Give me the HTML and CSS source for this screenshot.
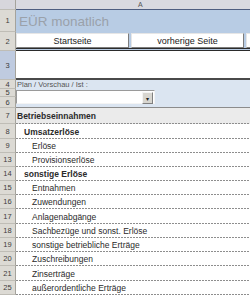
FILE: index.html
```html
<!DOCTYPE html>
<html lang="de">
<head>
    <meta charset="UTF-8">
    <title>EÜR monatlich</title>
    <link rel="stylesheet" href="styles.css">
</head>
<body>
    <div class="sheet">
        <div class="row colhead">
            <div class="rh corner"></div>
            <div class="cell">A</div>
        </div>
        <div class="row r1">
            <div class="rh">1</div>
            <div class="cell title">EÜR monatlich</div>
        </div>
        <div class="row r2">
            <div class="rh">2</div>
            <div class="cell nav">
                <button>Startseite</button>
                <button>vorherige Seite</button>
                <button></button>
            </div>
        </div>
        <div class="row r3">
            <div class="rh sel">3</div>
            <div class="cell box"></div>
        </div>
        <div class="row r4">
            <div class="rh">4</div>
            <div class="cell plan">Plan / Vorschau / Ist :</div>
        </div>
        <div class="row r5">
            <div class="rh">5</div>
            <div class="cell plan">
                <div class="combo"><span class="arrow">&#9662;</span></div>
            </div>
        </div>
        <div class="row r6">
            <div class="rh">6</div>
            <div class="cell plan last"></div>
        </div>
        <div class="row r7">
            <div class="rh">7</div>
            <div class="cell item section">Betriebseinnahmen</div>
        </div>
        <div class="row h15">
            <div class="rh">8</div>
            <div class="cell item group">Umsatzerlöse</div>
        </div>
        <div class="row">
            <div class="rh">9</div>
            <div class="cell item sub">Erlöse</div>
        </div>
        <div class="row">
            <div class="rh">13</div>
            <div class="cell item sub">Provisionserlöse</div>
        </div>
        <div class="row">
            <div class="rh">14</div>
            <div class="cell item group">sonstige Erlöse</div>
        </div>
        <div class="row">
            <div class="rh">15</div>
            <div class="cell item sub">Entnahmen</div>
        </div>
        <div class="row">
            <div class="rh">16</div>
            <div class="cell item sub">Zuwendungen</div>
        </div>
        <div class="row h15">
            <div class="rh">17</div>
            <div class="cell item sub">Anlagenabgänge</div>
        </div>
        <div class="row">
            <div class="rh">18</div>
            <div class="cell item sub">Sachbezüge und sonst. Erlöse</div>
        </div>
        <div class="row">
            <div class="rh">19</div>
            <div class="cell item sub">sonstige betriebliche Erträge</div>
        </div>
        <div class="row">
            <div class="rh">20</div>
            <div class="cell item sub">Zuschreibungen</div>
        </div>
        <div class="row h15">
            <div class="rh">21</div>
            <div class="cell item sub">Zinserträge</div>
        </div>
        <div class="row">
            <div class="rh">25</div>
            <div class="cell item sub">außerordentliche Erträge</div>
        </div>
    </div>
</body>
</html>
```

FILE: styles.css
```css
body {
    margin: 0;
    background-color: #fff;
    font-family: "Liberation Sans", Arial, sans-serif;
    overflow: hidden;
}
.sheet {
    width: 250px;
    overflow: hidden;
}
.row {
    display: flex;
    height: 14px;
}
.h15 {
    height: 15px;
}
.rh {
    width: 16px;
    flex: none;
    box-sizing: border-box;
    background-color: #dcdad4;
    border-right: 1px solid #a5a39c;
    border-bottom: 1px solid #bfbdb6;
    color: #3c3c3c;
    font-size: 7.5px;
    display: flex;
    align-items: center;
    justify-content: center;
}
.rh.sel {
    background-color: #bfcbe0;
}
.cell {
    flex: 1;
    min-width: 0;
    box-sizing: border-box;
    display: flex;
    align-items: center;
    overflow: hidden;
}
.colhead {
    height: 10px;
}
.colhead .rh {
    background-color: #d7d6dc;
}
.colhead .cell {
    background-color: #d9d9e0;
    border-bottom: 1px solid #4e5d80;
    color: #555;
    font-size: 7px;
    padding-left: 122px;
}
.r1 {
    height: 22px;
}
.title {
    background-color: #b8cce4;
    color: #9aa1aa;
    font-size: 13.5px;
    padding-left: 3px;
}
.r2 {
    height: 19px;
}
.nav {
    background-color: #b8cce4;
    border-bottom: 3px double #2b2b2b;
    gap: 2px;
    align-items: stretch;
    padding-top: 1px;
}
.nav button {
    width: 113px;
    flex: none;
    padding: 0;
    margin: 0;
    background-color: #fff;
    border: 1px solid;
    border-color: #e6e6e6 #7c7c7c #7c7c7c #e6e6e6;
    font-family: inherit;
    font-size: 9px;
    color: #222;
}
.r3 {
    height: 29px;
}
.box {
    background-color: #fff;
    border-bottom: 2px solid #4a4a4a;
}
.r4 {
    height: 9px;
}
.r5 {
    height: 8px;
}
.r6 {
    height: 11px;
}
.plan {
    background-color: #dbe5f1;
    color: #555;
    font-size: 7.5px;
    padding-left: 1px;
    position: relative;
    overflow: visible;
}
.plan.last {
    border-bottom: 1px solid #8c8c8c;
}
.combo {
    position: absolute;
    left: 0;
    top: 1px;
    width: 139px;
    height: 14px;
    box-sizing: border-box;
    background-color: #fff;
    border: 1px solid;
    border-color: #9a9a9a #f4f4f4 #f4f4f4 #9a9a9a;
    z-index: 2;
}
.arrow {
    position: absolute;
    right: 1px;
    top: 1px;
    width: 9px;
    height: 10px;
    background-color: #d8d6d0;
    border: 1px solid;
    border-color: #f4f4f4 #808080 #808080 #f4f4f4;
    font-size: 6px;
    color: #222;
    display: flex;
    align-items: center;
    justify-content: center;
}
.r7 {
    height: 16px;
}
.item {
    background: #fff repeating-linear-gradient(90deg, #8e8e8e 0 2px, transparent 2px 3px) left bottom / 100% 1px no-repeat;
    color: #2a2a2a;
    font-size: 8.5px;
}
.section {
    background-color: #ebebeb;
    font-weight: bold;
    font-size: 8.5px;
    padding-left: 1px;
}
.group {
    font-weight: bold;
    padding-left: 8px;
}
.sub {
    padding-left: 16px;
}
```
